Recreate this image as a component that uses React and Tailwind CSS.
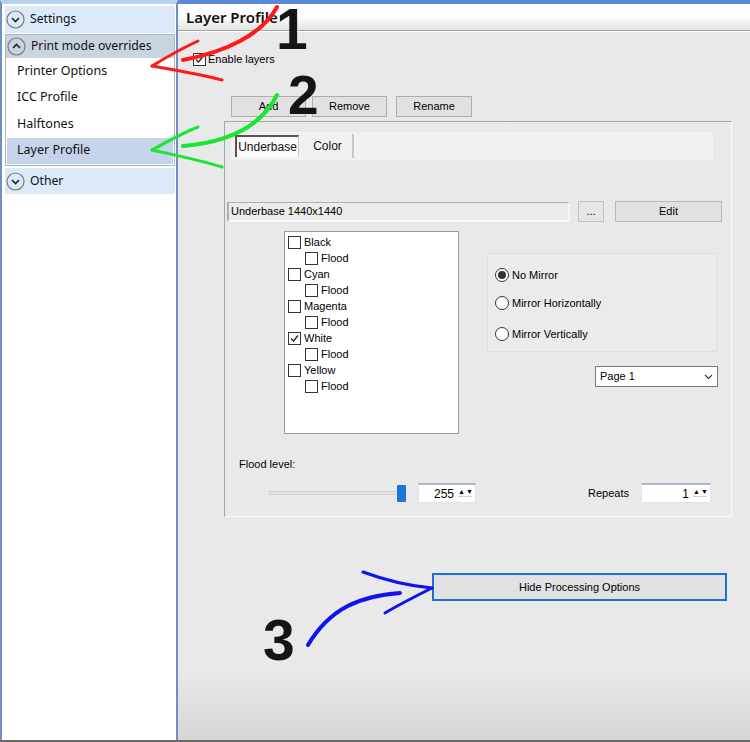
import React from 'react';

const ui = { fontFamily: '"Liberation Sans", Arial, sans-serif' };
const seg = { fontFamily: '"Noto Sans", "Open Sans", sans-serif' };

const CircleChevron = ({ up }) => (
  <svg width="19" height="19" viewBox="0 0 19 19" className="shrink-0">
    <circle cx="9.5" cy="9.5" r="8.5" fill="none" stroke="#7a7a7a" strokeWidth="1.2" />
    {up ? (
      <path d="M6 11 L9.5 7.5 L13 11" fill="none" stroke="#222" strokeWidth="1.6" />
    ) : (
      <path d="M6 8 L9.5 11.5 L13 8" fill="none" stroke="#222" strokeWidth="1.6" />
    )}
  </svg>
);

const Check = ({ checked }) => (
  <span className="w-[13px] h-[13px] border border-[#333] bg-white flex items-center justify-center shrink-0">
    {checked && (
      <svg width="11" height="11" viewBox="0 0 11 11">
        <path d="M2 5.5 L4.5 8 L9 2.5" fill="none" stroke="#222" strokeWidth="1.3" />
      </svg>
    )}
  </span>
);

const Radio = ({ checked }) => (
  <span className="w-[14px] h-[14px] rounded-full border border-[#333] bg-white flex items-center justify-center shrink-0">
    {checked && <span className="w-[8px] h-[8px] rounded-full bg-[#333]" />}
  </span>
);

const Btn = ({ children, className }) => (
  <div className={`h-[21px] bg-[#e1e1e1] border border-[#adadad] flex items-center justify-center text-[11px] text-black ${className}`}>
    {children}
  </div>
);

const Spin = ({ value, className }) => (
  <div className={`h-[20px] bg-white border border-[#dde3ea] border-t-[2px] border-t-[#a9b7c9] flex items-center justify-end pr-[3px] ${className}`}>
    <span className="text-[12px] text-black">{value}</span>
    <span className="ml-[4px] w-[14px] border-b border-[#cfcfcf] text-[7px] leading-[8px] text-black tracking-[1px] mb-[3px]">▲▼</span>
  </div>
);

const layers = [
  ['Black', false], ['Cyan', false], ['Magenta', false], ['White', true], ['Yellow', false],
];

const Sidebar = () => (
  <div className="w-[178px] h-full bg-white border-l-2 border-r-2 border-[#6f8fc2] border-t-[4px] border-t-[#b9cff0] pl-[3px] pr-[1px] flex flex-col" style={seg}>
    <div className="h-[27px] mt-[2px] bg-[#dce9f8] flex items-center gap-[5px] pl-[1px]">
      <CircleChevron />
      <span className="text-[12.2px] text-[#111]">Settings</span>
    </div>
    <div className="mt-[1px] border border-[#a9b6c6] flex flex-col">
      <div className="h-[23px] bg-[#c9d4e1] flex items-center gap-[5px] pl-[1px]">
        <CircleChevron up />
        <span className="text-[12.2px] text-[#111]">Print mode overrides</span>
      </div>
      <div className="flex flex-col px-[1px] pb-[1px]">
        {['Printer Options', 'ICC Profile', 'Halftones', 'Layer Profile'].map((t, i) => (
          <div key={t} className={`h-[26.5px] flex items-center pl-[10px] text-[12.5px] text-[#111] ${i === 3 ? 'bg-[#c6d4eb]' : ''}`}>
            {t}
          </div>
        ))}
      </div>
    </div>
    <div className="h-[26px] mt-[2px] bg-[#dce9f8] flex items-center gap-[5px] pl-[1px]">
      <CircleChevron />
      <span className="text-[12.2px] text-[#111]">Other</span>
    </div>
  </div>
);

const Main = () => (
  <div className="flex-1 h-full flex flex-col" style={ui}>
    <div className="h-[4px] bg-[#5a8ad8]" />
    <div className="h-[27px] bg-gradient-to-b from-white from-45% to-[#e3e3e3] flex items-center pl-[8px] border-b border-[#a3a3a3]">
      <span className="text-[15px] font-semibold text-[#111] mt-[1px]" style={seg}>Layer Profile</span>
    </div>
    <div className="flex-1 border-t border-white flex flex-col bg-gradient-to-b from-[#e9e9e9] from-90% to-[#d6d6d6]">
      <div className="mt-[20px] ml-[15px] flex items-center gap-[2px] h-[14px]">
        <Check checked />
        <span className="text-[11px] text-black">Enable layers</span>
      </div>
      <div className="mt-[30px] ml-[53px] flex">
        <Btn className="w-[75px]">Add</Btn>
        <Btn className="w-[75px] ml-[6px]">Remove</Btn>
        <Btn className="w-[76px] ml-[9px]">Rename</Btn>
      </div>
      <div className="mt-[4px] ml-[46px] w-[508px] h-[396px] border border-[#a5a5a5] border-r-[#f8f8f8] border-b-[#f8f8f8] flex flex-col">
        <div className="mt-[10px] ml-[6px] w-[482px] h-[28px] bg-[#f1f1f1] flex items-center pl-[4px] gap-[4px]">
          <div className="h-[22px] w-[64px] bg-[#fafafa] border-l-2 border-t-2 border-[#555] border-r border-r-[#c8c8c8] flex items-center justify-center text-[12px] text-[#111]">
            Underbase
          </div>
          <div className="h-[24px] w-[51px] border-r-2 border-[#c8c8c8] flex items-center justify-center text-[12px] text-[#111]">
            Color
          </div>
        </div>
        <div className="mt-[41px] ml-[2px] flex items-center">
          <div className="w-[343px] h-[20px] bg-[#ececec] border-l-2 border-t border-[#b0b0b0] border-r-2 border-r-[#f6f6f6] border-b-2 border-b-[#f6f6f6] flex items-center pl-[2px] text-[11px] text-black">
            Underbase 1440x1440
          </div>
          <Btn className="w-[26px] ml-[8px] h-[20px] bg-[#e6e6e6] border-[#c2c2c2]">...</Btn>
          <Btn className="w-[107px] ml-[11px] h-[20px] border-[#b8b8b8]">Edit</Btn>
        </div>
        <div className="flex mt-[9px]">
          <div className="ml-[59px] w-[175px] h-[203px] bg-white border border-[#9a9a9a] pt-[2px] pl-[3px] flex flex-col">
            {layers.map(([name, on]) => (
              <React.Fragment key={name}>
                <div className="h-[16px] flex items-center gap-[3px]">
                  <Check checked={on} />
                  <span className="text-[11px] text-black">{name}</span>
                </div>
                <div className="h-[16px] flex items-center gap-[3px] pl-[17px]">
                  <Check />
                  <span className="text-[11px] text-black">Flood</span>
                </div>
              </React.Fragment>
            ))}
          </div>
          <div className="ml-[28px] flex flex-col">
            <div className="mt-[22px] w-[230px] h-[99px] bg-[#ebebeb] border border-[#dedede] flex flex-col pl-[7px] pt-[13px]">
              <div className="h-[16px] flex items-center gap-[3px]">
                <Radio checked />
                <span className="text-[11px] text-black">No Mirror</span>
              </div>
              <div className="h-[16px] mt-[12px] flex items-center gap-[3px]">
                <Radio />
                <span className="text-[11px] text-black">Mirror Horizontally</span>
              </div>
              <div className="h-[16px] mt-[15px] flex items-center gap-[3px]">
                <Radio />
                <span className="text-[11px] text-black">Mirror Vertically</span>
              </div>
            </div>
            <div className="mt-[14px] ml-[108px] w-[123px] h-[21px] bg-white border border-[#7a7a7a] flex items-center justify-between pl-[4px] pr-[4px]">
              <span className="text-[11px] text-black">Page 1</span>
              <svg width="9" height="6" viewBox="0 0 9 6">
                <path d="M1 1 L4.5 4.5 L8 1" fill="none" stroke="#333" strokeWidth="1.1" />
              </svg>
            </div>
          </div>
        </div>
        <div className="mt-[24px] ml-[14px] text-[11px] text-black h-[12px] leading-[12px]">Flood level:</div>
        <div className="mt-[13px] flex items-center h-[20px]">
          <div className="ml-[44px] w-[131px] h-[4px] bg-[#e3e3e3] border border-[#d2d2d2]" />
          <div className="-ml-[3px] w-[9px] h-[17px] bg-[#1e73d8] rounded-[1px]" />
          <Spin value="255" className="ml-[12px] w-[58px]" />
          <span className="ml-[112px] text-[11px] text-black">Repeats</span>
          <Spin value="1" className="ml-[12px] w-[70px]" />
        </div>
      </div>
      <div className="mt-[56px] ml-[254px] w-[295px] h-[28px] bg-[#e1e1e1] border-2 border-[#1c6fd6] flex items-center justify-center text-[11px] text-black">
        Hide Processing Options
      </div>
    </div>
  </div>
);

const Marks = () => (
  <>
    <svg className="absolute inset-0 pointer-events-none" width="750" height="742" viewBox="0 0 750 742">
      <g fill="none" strokeLinecap="round">
        <path d="M277 7 C262 35 225 52 183 60" stroke="#ff1a1a" strokeWidth="4" />
        <path d="M152 66 C170 55 185 47 198 41" stroke="#ff1a1a" strokeWidth="3" />
        <path d="M152 66 C175 70 200 74 222 80" stroke="#ff1a1a" strokeWidth="3" />
        <path d="M183 146 C230 142 262 125 277 95" stroke="#18e632" strokeWidth="4" />
        <path d="M152 150 C170 140 185 132 198 127" stroke="#18e632" strokeWidth="3" />
        <path d="M152 150 C175 155 200 160 222 167" stroke="#18e632" strokeWidth="3" />
        <path d="M308 645 C330 608 360 596 400 593" stroke="#1212f0" strokeWidth="4" />
        <path d="M363 572 C390 582 410 586 432 588" stroke="#1212f0" strokeWidth="3" />
        <path d="M385 613 C400 604 416 596 432 588" stroke="#1212f0" strokeWidth="3" />
      </g>
    </svg>
    <span className="absolute left-[276px] top-[1px] text-[57px] font-bold leading-[57px] text-[#151515]" style={ui}>1</span>
    <span className="absolute left-[288px] top-[68px] text-[55px] font-bold leading-[55px] text-[#151515]" style={ui}>2</span>
    <span className="absolute left-[263px] top-[612px] text-[57px] font-bold leading-[57px] text-[#151515]" style={ui}>3</span>
  </>
);

export default function App() {
  return (
    <div className="relative w-[750px] h-[742px] overflow-hidden flex border-b-2 border-[#6a6a6a]">
      <Sidebar />
      <Main />
      <Marks />
    </div>
  );
}
